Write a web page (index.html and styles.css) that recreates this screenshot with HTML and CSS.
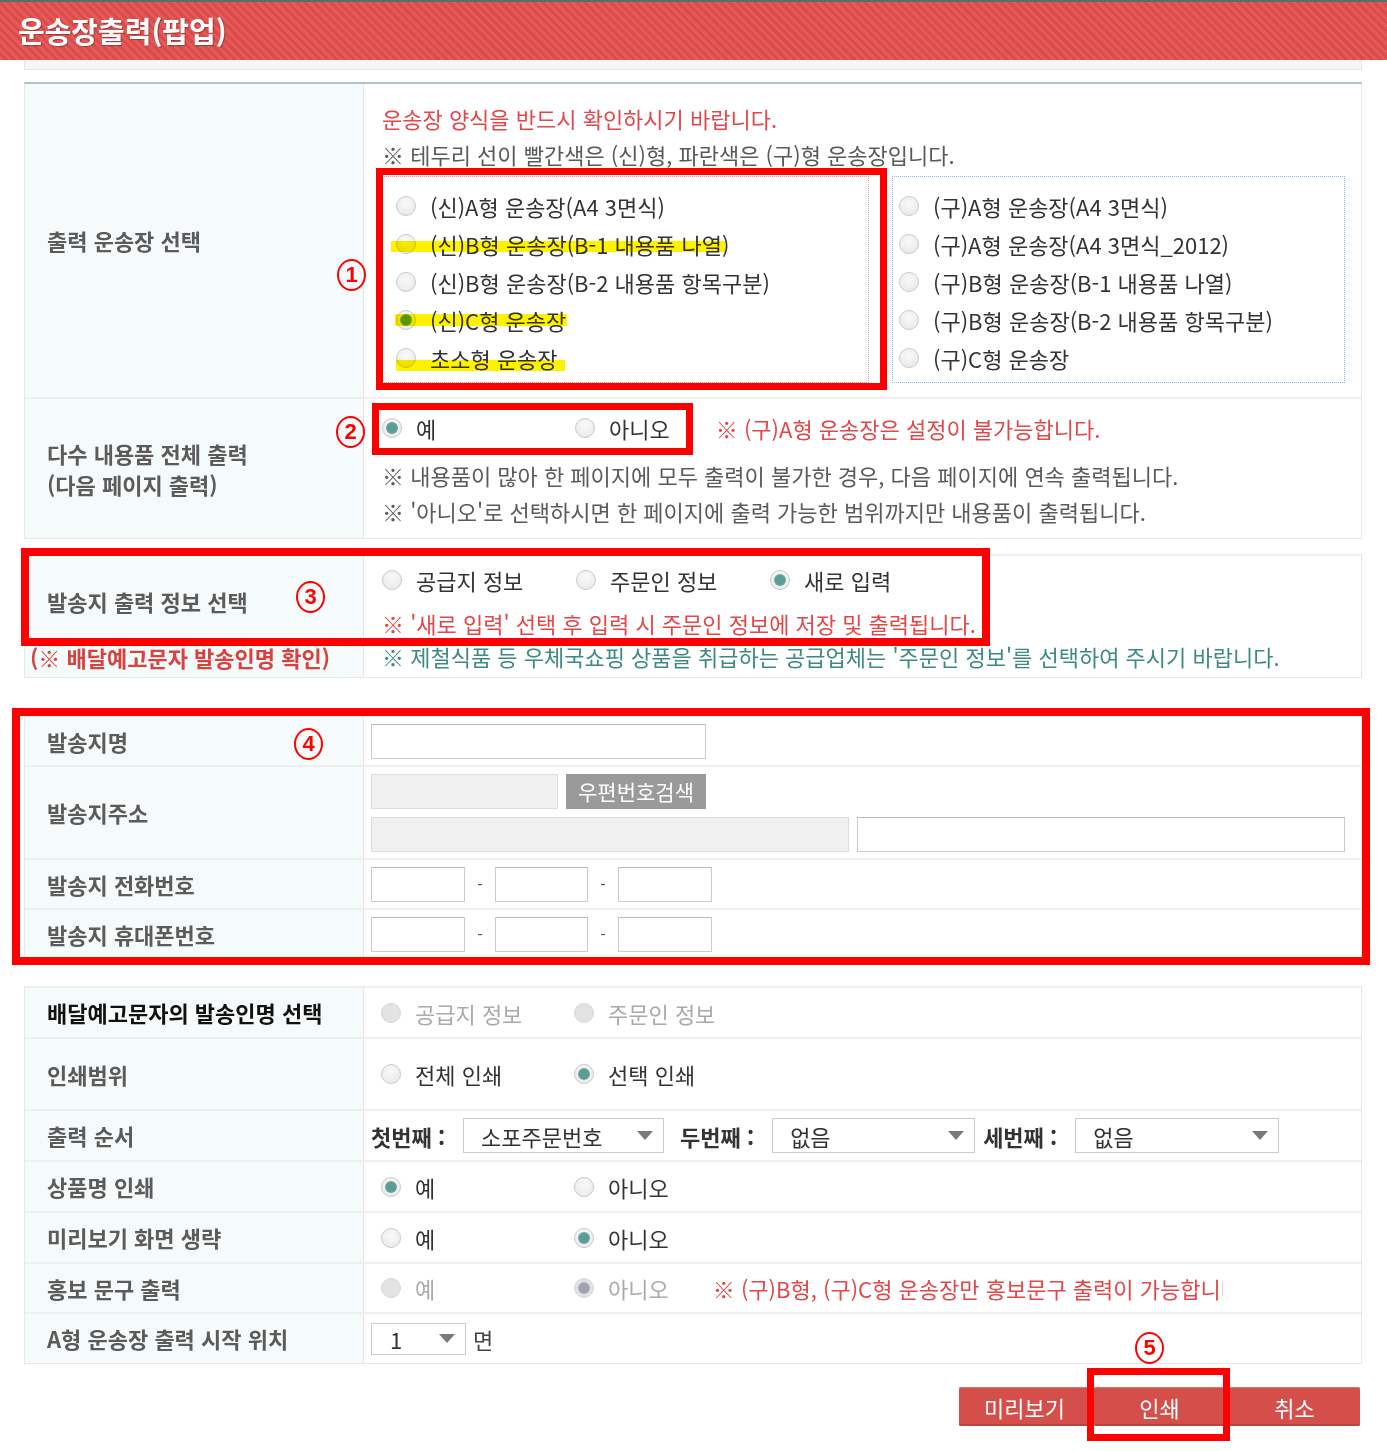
FILE: index.html
```html
<!DOCTYPE html>
<html lang="ko">
<head>
	<meta charset="UTF-8">
	<title>운송장출력(팝업)</title>
	<link rel="stylesheet" href="styles.css">
</head>
<body>
	<div id="head"><h1>운송장출력(팝업)</h1></div>

	<div id="wrap">
		<div class="strip"></div>

		<!-- 운송장 선택 -->
		<div class="tbl first">
			<div class="row r-type">
				<div class="th">출력 운송장 선택</div>
				<div class="td">
					<p class="red">운송장 양식을 반드시 확인하시기 바랍니다.</p>
					<p class="note">※ 테두리 선이 빨간색은 (신)형, 파란색은 (구)형 운송장입니다.</p>
					<div class="types">
						<div class="box new">
							<label class="opt"><span class="rd"></span>(신)A형 운송장(A4 3면식)</label>
							<label class="opt"><span class="rd"></span>(신)B형 운송장(B-1 내용품 나열)</label>
							<label class="opt"><span class="rd"></span>(신)B형 운송장(B-2 내용품 항목구분)</label>
							<label class="opt"><span class="rd on"></span>(신)C형 운송장</label>
							<label class="opt"><span class="rd"></span>초소형 운송장</label>
						</div>
						<div class="box old">
							<label class="opt"><span class="rd"></span>(구)A형 운송장(A4 3면식)</label>
							<label class="opt"><span class="rd"></span>(구)A형 운송장(A4 3면식_2012)</label>
							<label class="opt"><span class="rd"></span>(구)B형 운송장(B-1 내용품 나열)</label>
							<label class="opt"><span class="rd"></span>(구)B형 운송장(B-2 내용품 항목구분)</label>
							<label class="opt"><span class="rd"></span>(구)C형 운송장</label>
						</div>
					</div>
				</div>
			</div>
			<div class="row r-multi">
				<div class="th">다수 내용품 전체 출력<br>(다음 페이지 출력)</div>
				<div class="td">
					<div class="line">
						<label class="opt w193"><span class="rd on"></span>예</label>
						<label class="opt"><span class="rd"></span>아니오</label>
						<span class="red warn-a">※ (구)A형 운송장은 설정이 불가능합니다.</span>
					</div>
					<p class="note first-note">※ 내용품이 많아 한 페이지에 모두 출력이 불가한 경우, 다음 페이지에 연속 출력됩니다.</p>
					<p class="note">※ '아니오'로 선택하시면 한 페이지에 출력 가능한 범위까지만 내용품이 출력됩니다.</p>
				</div>
			</div>
		</div>

		<!-- 발송지 출력 정보 -->
		<div class="tbl sender">
			<div class="row r-sender">
				<div class="th">
					<div>발송지 출력 정보 선택</div>
					<div class="red-label">(※ 배달예고문자 발송인명 확인)</div>
				</div>
				<div class="td">
					<div class="line">
						<label class="opt w194"><span class="rd"></span>공급지 정보</label>
						<label class="opt w194"><span class="rd"></span>주문인 정보</label>
						<label class="opt"><span class="rd on"></span>새로 입력</label>
					</div>
					<p class="red small-note">※ '새로 입력' 선택 후 입력 시 주문인 정보에 저장 및 출력됩니다.</p>
					<p class="teal small-note">※ 제철식품 등 우체국쇼핑 상품을 취급하는 공급업체는 '주문인 정보'를 선택하여 주시기 바랍니다.</p>
				</div>
			</div>
		</div>

		<!-- 발송지 입력 -->
		<div class="tbl addr">
			<div class="row h48">
				<div class="th">발송지명</div>
				<div class="td tight"><span class="ipt w335"></span></div>
			</div>
			<div class="row h91">
				<div class="th">발송지주소</div>
				<div class="td tight stack">
					<div class="line">
						<span class="ipt gray w187"></span>
						<button class="zip">우편번호검색</button>
					</div>
					<div class="line">
						<span class="ipt gray w478"></span>
						<span class="ipt w488"></span>
					</div>
				</div>
			</div>
			<div class="row h48">
				<div class="th">발송지 전화번호</div>
				<div class="td tight">
					<span class="ipt w94"></span><span class="dash">-</span><span class="ipt w93"></span><span class="dash">-</span><span class="ipt w94"></span>
				</div>
			</div>
			<div class="row h48">
				<div class="th">발송지 휴대폰번호</div>
				<div class="td tight">
					<span class="ipt w94"></span><span class="dash">-</span><span class="ipt w93"></span><span class="dash">-</span><span class="ipt w94"></span>
				</div>
			</div>
		</div>

		<!-- 인쇄 옵션 -->
		<div class="tbl opts">
			<div class="row h49">
				<div class="th dark">배달예고문자의 발송인명 선택</div>
				<div class="td tight">
					<div class="group">
						<label class="opt w193 dis"><span class="rd off"></span>공급지 정보</label>
						<label class="opt dis"><span class="rd off"></span>주문인 정보</label>
					</div>
				</div>
			</div>
			<div class="row h70">
				<div class="th">인쇄범위</div>
				<div class="td tight">
					<div class="group">
						<label class="opt w193"><span class="rd"></span>전체 인쇄</label>
						<label class="opt"><span class="rd on"></span>선택 인쇄</label>
					</div>
				</div>
			</div>
			<div class="row h49">
				<div class="th">출력 순서</div>
				<div class="td tight">
					<b class="ord">첫번째 :</b>
					<span class="sel s1">소포주문번호</span>
					<b class="ord">두번째 :</b>
					<span class="sel s2">없음</span>
					<b class="ord ord3">세번째 :</b>
					<span class="sel s3">없음</span>
				</div>
			</div>
			<div class="row h49">
				<div class="th">상품명 인쇄</div>
				<div class="td tight">
					<div class="group">
						<label class="opt w193"><span class="rd on"></span>예</label>
						<label class="opt"><span class="rd"></span>아니오</label>
					</div>
				</div>
			</div>
			<div class="row h49">
				<div class="th">미리보기 화면 생략</div>
				<div class="td tight">
					<div class="group">
						<label class="opt w193"><span class="rd"></span>예</label>
						<label class="opt"><span class="rd on"></span>아니오</label>
					</div>
				</div>
			</div>
			<div class="row h48">
				<div class="th">홍보 문구 출력</div>
				<div class="td tight">
					<div class="group">
						<label class="opt w193 dis"><span class="rd off"></span>예</label>
						<label class="opt dis"><span class="rd off on"></span>아니오</label>
					</div>
					<span class="red clip">※ (구)B형, (구)C형 운송장만 홍보문구 출력이 가능합니다.</span>
				</div>
			</div>
			<div class="row h49">
				<div class="th">A형 운송장 출력 시작 위치</div>
				<div class="td tight">
					<span class="sel s4">1</span>
					<span class="unit">면</span>
				</div>
			</div>
		</div>

		<div class="btns">
			<button class="btn">미리보기</button>
			<button class="btn">인쇄</button>
			<button class="btn">취소</button>
		</div>
	</div>

	<!-- 안내용 표시 -->
	<span class="hl hl1"></span>
	<span class="hl hl2"></span>
	<span class="hl hl3"></span>

	<div class="mark m1"></div>
	<div class="mark m2"></div>
	<div class="mark m3"></div>
	<div class="mark m4"></div>
	<div class="mark m5"></div>

	<span class="num n1">1</span>
	<span class="num n2">2</span>
	<span class="num n3">3</span>
	<span class="num n4">4</span>
	<span class="num n5">5</span>
</body>
</html>
```

FILE: styles.css
```css
*{
	margin: 0;
	padding: 0;
	box-sizing: border-box;
}
body{
	position: relative;
	width: 1387px;
	min-height: 1451px;
	background: #fff;
	font-family: "Noto Sans CJK KR", "Noto Sans", sans-serif;
	font-size: 22px;
	color: #444;
}
#head{
	height: 60px;
	border-top: 2px solid #56706f;
	background: repeating-linear-gradient(45deg, #e35b59 0 3px, #dc4b49 3px 6px);
}
#head h1{
	padding-left: 18px;
	font-size: 29px;
	line-height: 56px;
	color: #fff;
	text-shadow: 1px 1px 1px rgba(0, 0, 0, .3);
}
#wrap{
	margin: 0 25px 0 24px;
}
.strip{
	height: 10px;
	background: #f6f6f6;
	border: 1px solid #e6e6e6;
	border-top: 0;
}

/* table */
.tbl{
	border: 1px solid #e8e8e8;
	border-top: 2px solid #eee;
}
.tbl.first{
	margin-top: 12px;
	border-top-color: #b5c1c1;
}
.tbl.sender{
	margin-top: 15px;
}
.tbl.addr{
	margin-top: 37px;
}
.tbl.opts{
	margin-top: 27px;
}
.row{
	display: grid;
	grid-template-columns: 339px 1fr;
	box-sizing: content-box;
	border-top: 2px solid #efefef;
}
.row:first-child{
	border-top: 0;
}
.th{
	display: flex;
	align-items: center;
	padding-left: 22px;
	background: #f5fafa;
	border-right: 1px solid #e6e6e6;
	font-weight: bold;
	color: #5b5b5b;
	line-height: 31px;
}
.th.dark{
	color: #111;
}
.td{
	padding: 0 15px 0 18px;
}
.td.tight{
	display: flex;
	align-items: center;
	padding-left: 7px;
}
.td.stack{
	flex-direction: column;
	align-items: flex-start;
	justify-content: center;
	gap: 8px;
}
.h48{ height: 48px; }
.h49{ height: 49px; }
.h70{ height: 70px; }
.h91{ height: 91px; }

/* text */
.red{
	color: #e2474a;
}
.teal{
	color: #3d8a85;
}
.note{
	color: #5a5a5a;
	line-height: 36px;
}
p.red{
	line-height: 36px;
}
.line{
	display: flex;
	align-items: center;
}

/* radios */
.opt{
	display: inline-flex;
	align-items: center;
	gap: 14px;
	line-height: 36px;
	color: #333;
}
.opt.dis{
	color: #aaa;
}
.w193{ width: 193px; }
.w194{ width: 194px; }
.group{
	display: flex;
	margin-left: 10px;
}
.rd{
	position: relative;
	flex: none;
	width: 20px;
	height: 20px;
	border: 1px solid #c9c9c9;
	border-radius: 50%;
	background: radial-gradient(circle at 50% 35%, #f9f9f9, #e7e7e7);
}
.rd.on::after{
	content: "";
	position: absolute;
	inset: 3px;
	border-radius: 50%;
	background: radial-gradient(circle, #5b9c94 50%, #93c2bc 100%);
}
.rd.off{
	background: #e3e3e3;
	border-color: #d6d6d6;
}
.rd.off.on::after{
	background: radial-gradient(circle, #a0a3b4 50%, #c6c8d2 100%);
}

/* row 1 */
.r-type .td{
	padding-top: 16px;
	padding-bottom: 14px;
}
.types{
	display: flex;
	gap: 23px;
	margin-top: 4px;
}
.box{
	height: 207px;
	padding-top: 10px;
}
.box .opt{
	display: flex;
	line-height: 38px;
}
.box.new{
	width: 487px;
	padding-left: 13px;
	border: 1px dotted #ee9a8c;
}
.box.old{
	width: 453px;
	padding-left: 6px;
	border: 1px dotted #8db4e6;
}

/* row 2 */
.r-multi .td{
	padding-top: 11px;
	padding-bottom: 9px;
}
.warn-a{
	margin-left: 46px;
}
.first-note{
	margin-top: 11px;
}

/* sender */
.r-sender{
	height: 121px;
}
.r-sender .th{
	display: block;
	padding-top: 27px;
	line-height: 36px;
}
.red-label{
	margin-top: 20px;
	margin-left: -17px;
	color: #d9413f;
}
.r-sender .td{
	padding-top: 6px;
}
.small-note{
	line-height: 33px;
}
p.red.small-note{
	margin-top: 9px;
	line-height: 33px;
}

/* inputs */
.ipt{
	display: inline-block;
	height: 35px;
	background: #fff;
	border: 1px solid #ccc;
	border-top-color: #bbb;
}
.ipt.gray{
	background: #f0f0f0;
	border-color: #ddd;
}
.w335{ width: 335px; }
.w187{ width: 187px; }
.w478{ width: 478px; }
.w488{ width: 488px; }
.w94{ width: 94px; }
.w93{ width: 93px; }
.addr .line{
	gap: 8px;
}
.zip{
	width: 140px;
	height: 35px;
	border: none;
	background: #9a9a9a;
	font-family: inherit;
	font-size: 21px;
	color: #fff;
}
.dash{
	width: 30px;
	text-align: center;
	font-size: 16px;
	color: #555;
}

/* selects */
.ord{
	color: #333;
	margin-right: 18px;
}
.ord3{
	margin-left: -8px;
}
.sel{
	display: inline-flex;
	align-items: center;
	justify-content: space-between;
	height: 35px;
	padding: 0 10px 0 17px;
	margin-right: 16px;
	background: #fff;
	border: 1px solid #ccc;
	color: #333;
}
.sel::after{
	content: "";
	border-left: 8px solid transparent;
	border-right: 8px solid transparent;
	border-top: 9px solid #7a7a7a;
}
.s1{ width: 201px; }
.s2{ width: 203px; }
.s3{ width: 204px; }
.s4{
	width: 95px;
	height: 32px;
	padding-left: 18px;
	margin-right: 7px;
}
.clip{
	width: 510px;
	margin-left: 44px;
	overflow: hidden;
	white-space: nowrap;
}

/* buttons */
.btns{
	display: flex;
	justify-content: flex-end;
	gap: 4px;
	margin-top: 23px;
	padding-right: 2px;
}
.btn{
	width: 131px;
	height: 39px;
	border: none;
	border-radius: 2px;
	background: #d44f4a;
	box-shadow: inset 0 -2px 0 #b84340, inset 0 1px 0 #e07470;
	font-family: inherit;
	font-size: 22px;
	color: #fff;
}

/* annotation marks */
.hl{
	position: absolute;
	background: #fff200;
	mix-blend-mode: multiply;
}
.hl1{ left: 391px; top: 241px; width: 334px; height: 11px; }
.hl2{ left: 395px; top: 314px; width: 172px; height: 12px; }
.hl3{ left: 396px; top: 360px; width: 169px; height: 11px; }

.mark{
	position: absolute;
	border: 7px solid #f00;
}
.m1{ left: 376px; top: 168px; width: 511px; height: 222px; }
.m2{ left: 372px; top: 403px; width: 321px; height: 52px; }
.m3{ left: 21px; top: 548px; width: 969px; height: 98px; border-width: 8px; }
.m4{ left: 12px; top: 708px; width: 1358px; height: 257px; border-width: 8px; }
.m5{ left: 1087px; top: 1368px; width: 143px; height: 73px; }

.num{
	position: absolute;
	width: 29px;
	height: 32px;
	border: 2px solid #f00;
	border-radius: 50%;
	font-family: "Liberation Sans", sans-serif;
	font-size: 22px;
	font-weight: bold;
	line-height: 28px;
	text-align: center;
	color: #f00;
}
.n1{ left: 337px; top: 259px; }
.n2{ left: 336px; top: 416px; }
.n3{ left: 296px; top: 581px; }
.n4{ left: 294px; top: 728px; }
.n5{ left: 1135px; top: 1332px; }
```
